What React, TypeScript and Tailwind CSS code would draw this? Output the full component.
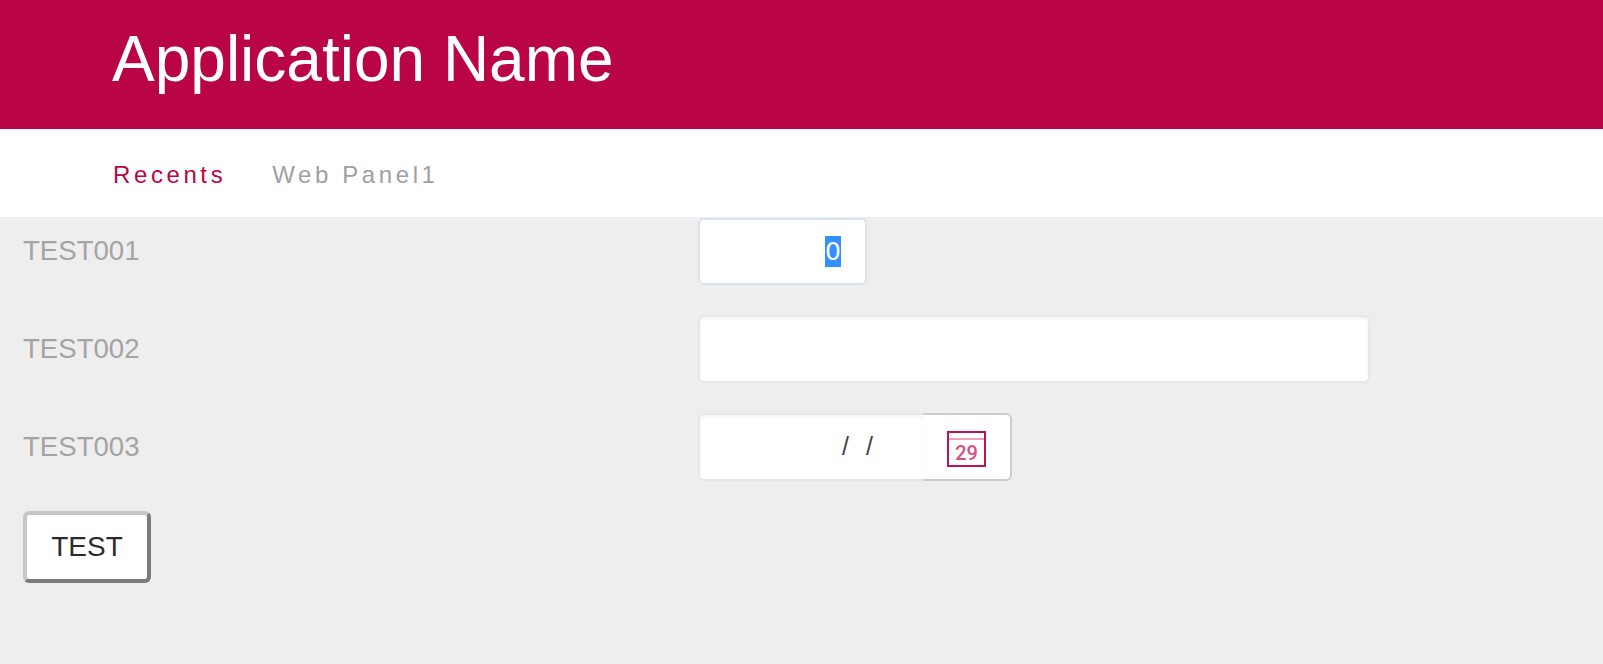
const arial = "font-['Liberation_Sans',Arial,sans-serif]";

const CalendarIcon = () => (
  <svg width="39" height="36" viewBox="0 0 39 36" fill="none">
    <rect x="1" y="1" width="37" height="34" stroke="#c2114f" strokeWidth="2" />
    <line x1="2" y1="8" x2="37" y2="8" stroke="#eba3bb" strokeWidth="2" />
    <text x="19.5" y="29" textAnchor="middle" fontSize="20" fontWeight="500" fill="#d94f7e" fontFamily="Roboto, sans-serif">
      29
    </text>
  </svg>
);

const Label = ({ children, first }: { children: string; first?: boolean }) => (
  <div className={`w-[698px] pl-[23px] text-[27.6px] leading-[31px] text-[#a4a4a4] ${first ? "pt-[17px]" : "pt-[18px]"}`}>
    {children}
  </div>
);

const softInput = "border-2 border-[#e7e7e7] bg-white shadow-[inset_0_2px_3px_rgba(0,0,0,0.05)]";

export default function App() {
  return (
    <div className={`min-h-[664px] bg-[#eeeeee] ${arial}`}>
      <header className="flex h-[129px] items-center bg-[#b90545] pb-[12px] pl-[112px]">
        <h1 className="text-[64px] leading-none text-white">Application Name</h1>
      </header>

      <nav className="flex h-[88px] items-center gap-[46px] bg-white pt-[3px] pl-[113px] text-[24px] tracking-[3.6px]">
        <span className="text-[#b90545]">Recents</span>
        <span className="text-[#a0a0a0]">Web Panel1</span>
      </nav>

      <div className="flex h-[98px] pt-px">
        <Label first>TEST001</Label>
        <div className="flex h-[67px] w-[169px] items-center justify-end rounded-[6px] border-2 border-[#d9e3ec] bg-white pr-[24px] font-['DejaVu_Sans',sans-serif] text-[25px]">
          <span className="bg-[#3390ff] leading-[31px] text-white">0</span>
        </div>
      </div>

      <div className="flex h-[98px]">
        <Label>TEST002</Label>
        <div className={`h-[68px] w-[672px] rounded-[6px] ${softInput}`} />
      </div>

      <div className="flex h-[98px]">
        <Label>TEST003</Label>
        <div className="flex h-[68px]">
          <div className={`flex w-[225px] items-center justify-end gap-[17px] rounded-l-[6px] border-r-0 pr-[50px] text-[25px] text-[#444444] ${softInput}`}>
            <span>/</span>
            <span>/</span>
          </div>
          <div className="flex w-[89px] items-center justify-center rounded-r-[6px] border-2 border-l-0 border-[#cccccc] bg-white pt-[3px]">
            <CalendarIcon />
          </div>
        </div>
      </div>

      <div className="pl-[23px]">
        <button className="flex h-[72px] w-[128px] items-center justify-center rounded-[6px] border-4 border-t-[#c6c6c6] border-l-[#c6c6c6] border-r-[#7b7b7b] border-b-[#7b7b7b] bg-white text-[28px] text-[#2b2b2b]">
          TEST
        </button>
      </div>
    </div>
  );
}
